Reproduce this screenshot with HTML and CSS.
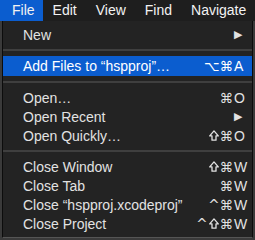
FILE: index.html
```html
<!DOCTYPE html>
<html lang="en">
<head>
    <meta charset="UTF-8">
    <meta name="viewport" content="width=device-width, initial-scale=1.0">
    <title>File Menu</title>
    <link rel="stylesheet" href="styles.css">
</head>
<body>

    <div class="menubar">
        <span class="bar-item active">File</span>
        <span class="bar-item">Edit</span>
        <span class="bar-item">View</span>
        <span class="bar-item">Find</span>
        <span class="bar-item">Navigate</span>
    </div>

    <div class="menu">
        <div class="item">
            <span class="label">New</span>
            <span class="shortcut"><span class="mods"></span><span class="key arrow">&#9654;</span></span>
        </div>
        <div class="sep"></div>
        <div class="item selected">
            <span class="label">Add Files to “hspproj”…</span>
            <span class="shortcut"><span class="mods">⌥⌘</span><span class="key">A</span></span>
        </div>
        <div class="sep"></div>
        <div class="item">
            <span class="label">Open…</span>
            <span class="shortcut"><span class="mods">⌘</span><span class="key">O</span></span>
        </div>
        <div class="item">
            <span class="label">Open Recent</span>
            <span class="shortcut"><span class="mods"></span><span class="key arrow">&#9654;</span></span>
        </div>
        <div class="item">
            <span class="label">Open Quickly…</span>
            <span class="shortcut"><span class="mods"><svg class="shift" viewBox="0 0 10 11"><path d="M5 0.9 L9.3 5.9 H7 V10.2 H3 V5.9 H0.7 Z"/></svg>⌘</span><span class="key">O</span></span>
        </div>
        <div class="sep"></div>
        <div class="item">
            <span class="label">Close Window</span>
            <span class="shortcut"><span class="mods"><svg class="shift" viewBox="0 0 10 11"><path d="M5 0.9 L9.3 5.9 H7 V10.2 H3 V5.9 H0.7 Z"/></svg>⌘</span><span class="key">W</span></span>
        </div>
        <div class="item">
            <span class="label">Close Tab</span>
            <span class="shortcut"><span class="mods">⌘</span><span class="key">W</span></span>
        </div>
        <div class="item">
            <span class="label">Close “hspproj.xcodeproj”</span>
            <span class="shortcut"><span class="mods">^⌘</span><span class="key">W</span></span>
        </div>
        <div class="item">
            <span class="label">Close Project</span>
            <span class="shortcut"><span class="mods">^<svg class="shift" viewBox="0 0 10 11"><path d="M5 0.9 L9.3 5.9 H7 V10.2 H3 V5.9 H0.7 Z"/></svg>⌘</span><span class="key">W</span></span>
        </div>
    </div>

</body>
</html>
```

FILE: styles.css
```css
body {
    margin: 0;
    font-family: "Liberation Sans", Arial, "DejaVu Sans", sans-serif;
    font-size: 14px;
    color: #e2e2e2;
    background-color: #3a3a3a;
    width: 255px;
    height: 240px;
    overflow: hidden;
}
.menubar {
    display: flex;
    height: 21px;
    background-color: #1e1e1e;
}
.bar-item {
    padding: 0 9.5px;
    line-height: 21px;
    color: #f2f2f2;
}
.bar-item.active {
    background-color: #0b5dcf;
    padding-left: 12px;
    padding-right: 8.5px;
}
.menu {
    margin-left: 2px;
    width: 249px;
    padding: 4px 0;
    background-color: #232323;
    border-left: 1px solid #0c0c0c;
    border-right: 1px solid #0c0c0c;
    border-bottom: 1px solid #555;
}
.item {
    display: flex;
    justify-content: space-between;
    align-items: center;
    height: 19px;
    padding-left: 20px;
    padding-right: 4px;
}
.item.selected {
    height: 20px;
    background-color: #0b5dcf;
    color: #fff;
}
.shortcut {
    display: flex;
    align-items: center;
}
.mods {
    display: flex;
    align-items: center;
    justify-content: flex-end;
    font-family: "DejaVu Sans", sans-serif;
    font-size: 13.5px;
}
.shift {
    width: 10px;
    height: 11px;
    margin: 0 1px;
    fill: none;
    stroke: #e2e2e2;
    stroke-width: 1.3;
    stroke-linejoin: round;
}
.key {
    width: 14px;
    margin-left: 1px;
}
.arrow {
    font-family: "DejaVu Sans", sans-serif;
    font-size: 11px;
}
.sep {
    height: 2px;
    margin: 5px 0;
    background-color: #3f3f3f;
}
```
